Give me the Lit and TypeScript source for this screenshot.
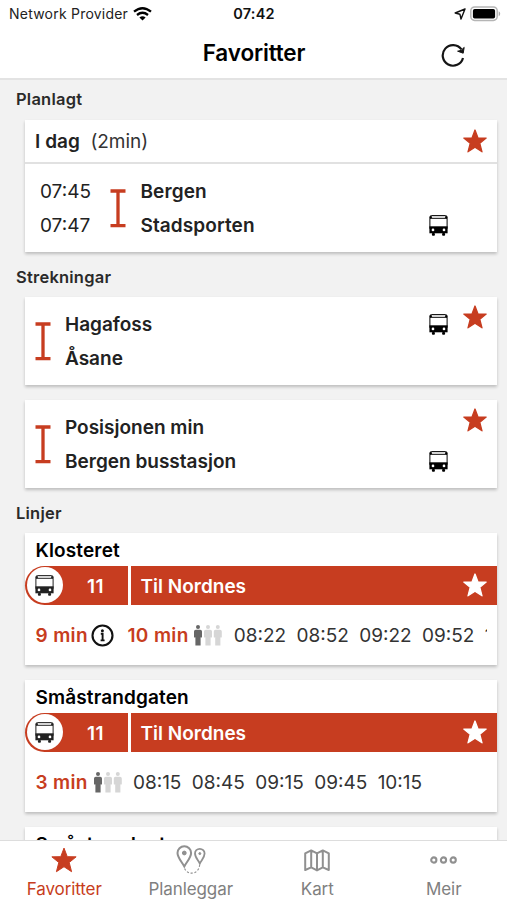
import { LitElement, html, css, svg, nothing } from "lit";
import { customElement, property } from "lit/decorators.js";

const starPath = "M12 1 L15 8.9 L23.2 9.1 L16.8 14.3 L19 22.8 L12 18.2 L5 22.8 L7.2 14.3 L0.8 9.1 L9 8.9 Z";

const person = (x: number, fill: string) => svg`
  <g transform="translate(${x} 0)" fill=${fill}>
    <circle cx="4" cy="2" r="2"></circle>
    <path d="M1.8 4.7 H6.2 Q8 4.7 8 6.5 V12 Q8 12.6 7.3 12.6 T6.6 12 V20.6 H1.4 V12 Q1.4 12.6 .7 12.6 T0 12 V6.5 Q0 4.7 1.8 4.7 Z"></path>
  </g>`;

const icons: Record<string, unknown> = {
  star: html`<svg width="24" height="24" viewBox="0 0 24 24"><path d=${starPath} fill="currentColor" stroke="currentColor" stroke-width="1.3" stroke-linejoin="round"/></svg>`,
  bus: html`<svg width="19" height="21" viewBox="0 0 19 21">
    <rect x=".9" y=".6" width="17.2" height="14" rx="1.6" fill="#fff" stroke="currentColor" stroke-width="1"/>
    <path d="M1 3.4 H18" stroke="currentColor" stroke-width=".9"/>
    <path d="M.6 2.2 L2 .6 L3.4 2.6 L1.2 3.6Z M18.4 2.2 L17 .6 L15.6 2.6 L17.8 3.6Z" fill="currentColor"/>
    <rect x="3.6" y="1.3" width="11.8" height="1.5" fill="#ccc"/>
    <path d="M.4 11.3 H18.6 V18.3 H.4Z" fill="currentColor"/>
    <rect x="2.9" y="18" width="3" height="2.7" rx=".9" fill="currentColor"/>
    <rect x="13.1" y="18" width="3" height="2.7" rx=".9" fill="currentColor"/>
    <circle cx="4" cy="14.9" r="1.35" fill="#fff"/><circle cx="15" cy="14.9" r="1.35" fill="#fff"/></svg>`,
  span: html`<svg width="16" height="39" viewBox="0 0 16 39"><path d="M.5 2 H15.5 M.5 36.6 H15.5 M8 2 V36.6" fill="none" stroke="#c73d20" stroke-width="3.3"/></svg>`,
  info: html`<svg width="23" height="23" viewBox="0 0 23 23"><circle cx="11.5" cy="11.5" r="10" fill="none" stroke="#111" stroke-width="2.1"/><circle cx="11.4" cy="6.7" r="1.5" fill="#111"/><path d="M9.8 9.7 H11.6 V16.2 M9.6 16.4 H13.6" fill="none" stroke="#111" stroke-width="1.9"/></svg>`,
  crowd: html`<svg width="28" height="21" viewBox="0 0 28 21">${person(0, "#666")}${person(10, "#d6d6d6")}${person(19.8, "#d6d6d6")}</svg>`,
  refresh: html`<svg width="24" height="24" viewBox="0 0 24 24"><path d="M22 15 A10.3 10.3 0 1 1 20.4 6.4" fill="none" stroke="#151515" stroke-width="2.2"/><path d="M23.2 4.4 L22.2 10.2 L16.6 8.2 L20 7.4 Z" fill="#151515" stroke="#151515" stroke-linejoin="round"/></svg>`,
  wifi: html`<svg width="19" height="14" viewBox="0 0 19 14"><g fill="none" stroke="#000" stroke-width="2.3"><path d="M1 4.7 Q9.5 -2.3 18 4.7"/><path d="M4 8 Q9.5 3.6 15 8"/></g><path d="M6.4 10.4 Q9.5 8.2 12.6 10.4 L9.5 13.5Z"/></svg>`,
  location: html`<svg width="12" height="12" viewBox="0 0 12 12"><path d="M11 1 L1.2 5 L5.9 6.2 L7 11 Z" fill="none" stroke="#111" stroke-width="1.4" stroke-linejoin="round"/></svg>`,
  battery: html`<svg width="31" height="16" viewBox="0 0 31 16"><rect x=".8" y="1" width="26.4" height="13.4" rx="3.8" fill="#fff" stroke="#b5b5b5" stroke-width="1.5"/><rect x="2.9" y="3" width="22.2" height="9.6" rx="1.8"/><path d="M28.7 5.2 Q30.2 6 30.2 7.7 T28.7 10.2Z" fill="#aaa"/></svg>`,
  tabstar: html`<svg width="26" height="26" viewBox="0 0 24 24"><path d=${starPath} fill="currentColor" stroke="currentColor" stroke-width=".9" stroke-linejoin="round"/></svg>`,
  pins: html`<svg width="30" height="30" viewBox="0 0 30 30" fill="none" stroke="currentColor"><path d="M8.3 21.4 C5.5 16.5 1.5 12.5 1.5 8 A6.8 6.8 0 0 1 15.1 8 C15.1 12.5 11 16.5 8.3 21.4Z" stroke-width="2"/><circle cx="8.3" cy="8" r="1.9" fill="currentColor"/><path d="M23.8 18.5 C22 15 19 12.4 19 8.6 A4.8 4.8 0 0 1 28.6 8.6 C28.6 12.4 25.5 15 23.8 18.5Z" stroke-width="1.8"/><circle cx="23.8" cy="8.6" r="1" fill="currentColor"/><path d="M8.6 23.5 C11 30 22.5 30.5 23.7 19.8" stroke-width="1.1" stroke-dasharray="2.2 1.7"/></svg>`,
  map: html`<svg width="26" height="23" viewBox="0 0 26 23" fill="none" stroke="currentColor" stroke-width="2" stroke-linejoin="round"><path d="M1.2 4.4 L7.2 1.4 L13 4.4 L18.8 1.4 L24.8 4.4 V21 L18.8 18.4 L13 21.4 L7.2 18.4 L1.2 21Z M7.2 1.4 V18.4 M13 4.4 V21.4 M18.8 1.4 V18.4"/></svg>`,
  more: html`<svg width="27" height="8" viewBox="0 0 27 8" fill="none" stroke="currentColor" stroke-width="2.1"><circle cx="3.8" cy="4" r="2.6"/><circle cx="13.5" cy="4" r="2.6"/><circle cx="23.2" cy="4" r="2.6"/></svg>`,
};

const base = css`
  * { box-sizing: border-box; }
  svg { display: block; flex: none; }
  .card { background: #fff; box-shadow: 0 2px 3px rgba(0, 0, 0, 0.22); }
  .star { color: #c73d20; }
`;

@customElement("trip-card")
class TripCard extends LitElement {
  @property() from = "";
  @property() to = "";
  @property() day = "";
  @property() wait = "";
  @property({ attribute: false }) times: string[] = [];
  @property() busRow = "to";

  static styles = [base, css`
    :host { display: block; }
    .head { height: 43.5px; display: flex; align-items: center; padding: 0 10px; border-bottom: 2px solid #e1e1e1; font-size: 19px; }
    .day, .wait { padding-top: 2px; }
    .day { font-weight: 600; letter-spacing: 0.05px; }
    .wait { margin-left: 10.5px; color: #333; letter-spacing: -0.05px; }
    .head .star { margin-left: auto; }
    .body { height: 88px; display: flex; align-items: center; padding: 2px 10px 0; }
    .times { width: 75px; flex: none; padding-left: 5px; }
    .row { height: 34.3px; line-height: 34.3px; display: flex; align-items: center; white-space: nowrap; }
    .stops { flex: 1; margin-left: 14px; font-weight: 600; font-size: 19px; color: #222; }
    .times + .span + .stops { margin-left: 14.5px; letter-spacing: 0.1px; }
    .stops .row { justify-content: space-between; }
    .stops .row:first-child, .times .row:first-child { padding-top: 1px; }
    .times .row { font-size: 19px; color: #222; }
    .side { width: 24px; margin-left: 15px; align-self: flex-start; padding-top: 6.5px; }
    .bus { color: #000; margin-top: -1px; }
  `];

  render() {
    const bus = html`<span class="bus">${icons.bus}</span>`;
    return html`<div class="card">
      ${this.day ? html`<div class="head"><span class="day">${this.day}</span><span class="wait">${this.wait}</span><span class="star">${icons.star}</span></div>` : nothing}
      <div class="body">
        ${this.times.length ? html`<div class="times">${this.times.map((t) => html`<div class="row">${t}</div>`)}</div>` : nothing}
        <div class="span">${icons.span}</div>
        <div class="stops">
          <div class="row">${this.from}${this.busRow === "from" ? bus : nothing}</div>
          <div class="row">${this.to}${this.busRow === "to" ? bus : nothing}</div>
        </div>
        <div class="side star">${this.day ? nothing : icons.star}</div>
      </div>
    </div>`;
  }
}

type Departure = { soon?: string; time?: string; icon?: "info" | "crowd" };

@customElement("line-card")
class LineCard extends LitElement {
  @property() stop = "";
  @property({ attribute: false }) departures: Departure[] = [];

  static styles = [base, css`
    :host { display: block; }
    .card { height: 132px; }
    .name { height: 33px; line-height: 35px; padding-left: 10.5px; font-size: 19px; font-weight: 600; color: #000; letter-spacing: 0.13px; }
    .bar { height: 39.5px; display: flex; background: #c73d20; color: #fff; font-weight: 600; font-size: 19px; border-radius: 20px 0 0 20px; }
    .line { width: 105.5px; display: flex; align-items: center; border-right: 3px solid #fff; }
    .disc { width: 36px; height: 36px; margin-left: 1.5px; border-radius: 50%; background: #fff; color: #222; display: grid; place-items: center; flex: none; }
    .no { flex: 1; text-align: center; padding: 1.5px 0 0 1px; letter-spacing: 0.5px; }
    .dest { flex: 1; display: flex; align-items: center; justify-content: space-between; padding: 0 10px; }
    .dest span { padding-top: 1.5px; }
    .deps { height: 59.5px; margin: 0 10px; padding: 2px 0 0 0.5px; display: flex; align-items: center; overflow: hidden; white-space: nowrap; font-size: 19px; color: #333; }
    .dep { display: flex; align-items: center; flex: none; margin-right: 10.4px; }
    .soon { color: #c73d20; font-weight: 600; letter-spacing: 0.35px; }
    .info { margin-left: 2.7px; margin-right: 3.5px; }
    .crowd { margin-left: 5.7px; margin-right: 1px; }
  `];

  render() {
    return html`<div class="card">
      <div class="name">${this.stop}</div>
      ${this.departures.length ? html`<div class="bar">
        <div class="line"><span class="disc">${icons.bus}</span><span class="no">11</span></div>
        <div class="dest"><span>Til Nordnes</span>${icons.star}</div>
      </div>
      <div class="deps">${this.departures.map((d) => html`<div class="dep">
        <span class=${d.soon ? "soon" : "time"}>${d.soon ?? d.time}</span>${d.icon ? html`<span class=${d.icon}>${icons[d.icon]}</span>` : nothing}</div>`)}
      </div>` : nothing}
    </div>`;
  }
}

@customElement("app-root")
class AppRoot extends LitElement {
  static styles = [base, css`
    :host { display: flex; flex-direction: column; height: 900px; overflow: hidden; background: #f2f2f2; font-family: Inter, "Liberation Sans", sans-serif; color: #222; }
    header { height: 80px; flex: none; background: #fff; border-bottom: 2px solid #e3e3e3; }
    .status { height: 27px; display: grid; grid-template-columns: 1fr auto 1fr; align-items: center; padding: 0 6px 0 9px; font-size: 14px; }
    .net { display: flex; align-items: center; gap: 5px; color: #222; letter-spacing: 0.22px; }
    .clock { font-weight: 600; color: #111; font-size: 14.5px; letter-spacing: 0.2px; margin-left: -2px; }
    .power { display: flex; justify-content: flex-end; align-items: center; gap: 4px; }
    .nav { height: 51px; display: grid; grid-template-columns: 1fr auto 1fr; align-items: center; }
    .title { grid-column: 2; font-size: 22.5px; font-weight: 600; color: #000; letter-spacing: -0.15px; padding: 0 0 1px 1px; }
    .nav svg { justify-self: end; margin-right: 42px; grid-column: 3; margin-top: 4px; }
    main { flex: 1; min-height: 0; overflow: hidden; padding: 0 10px 0 25px; }
    h2 { margin: 0 0 0 -9px; height: 45px; line-height: 50px; font-size: 16.5px; font-weight: 600; color: #2a2a2a; letter-spacing: 0.22px; }
    h2.first { height: 40px; line-height: 39px; }
    .list { display: flex; flex-direction: column; gap: 15px; }
    footer { flex: none; height: 60px; background: #fff; border-top: 1px solid #ddd; display: grid; grid-template-columns: repeat(4, 1fr); padding: 0 0 0 1px; }
    .tab { display: flex; flex-direction: column; align-items: center; color: #909090; font-size: 17px; }
    .pic { height: 38px; display: grid; place-items: center; }
    .tab span { line-height: 21px; letter-spacing: -0.1px; color: #808080; }
    .tab.on, .tab.on span { color: #c73d20; }
  `];

  render() {
    const tabs = [["Favoritter", "tabstar"], ["Planleggar", "pins"], ["Kart", "map"], ["Meir", "more"]];
    return html`
      <header>
        <div class="status">
          <div class="net">Network Provider ${icons.wifi}</div>
          <div class="clock">07:42</div>
          <div class="power">${icons.location}${icons.battery}</div>
        </div>
        <div class="nav"><div class="title">Favoritter</div>${icons.refresh}</div>
      </header>
      <main>
        <h2 class="first">Planlagt</h2>
        <trip-card day="I dag" wait="(2min)" .times=${["07:45", "07:47"]} from="Bergen" to="Stadsporten"></trip-card>
        <h2>Strekningar</h2>
        <div class="list">
          <trip-card from="Hagafoss" to="Åsane" busRow="from"></trip-card>
          <trip-card from="Posisjonen min" to="Bergen busstasjon"></trip-card>
        </div>
        <h2>Linjer</h2>
        <div class="list">
          <line-card stop="Klosteret" .departures=${[{ soon: "9 min", icon: "info" }, { soon: "10 min", icon: "crowd" }, { time: "08:22" }, { time: "08:52" }, { time: "09:22" }, { time: "09:52" }, { time: "10:22" }]}></line-card>
          <line-card stop="Småstrandgaten" .departures=${[{ soon: "3 min", icon: "crowd" }, { time: "08:15" }, { time: "08:45" }, { time: "09:15" }, { time: "09:45" }, { time: "10:15" }]}></line-card>
          <line-card stop="Småstrandgaten"></line-card>
        </div>
      </main>
      <footer>${tabs.map(([label, icon], i) => html`<div class="tab ${i === 0 ? "on" : ""}"><div class="pic">${icons[icon]}</div><span>${label}</span></div>`)}</footer>`;
  }
}
